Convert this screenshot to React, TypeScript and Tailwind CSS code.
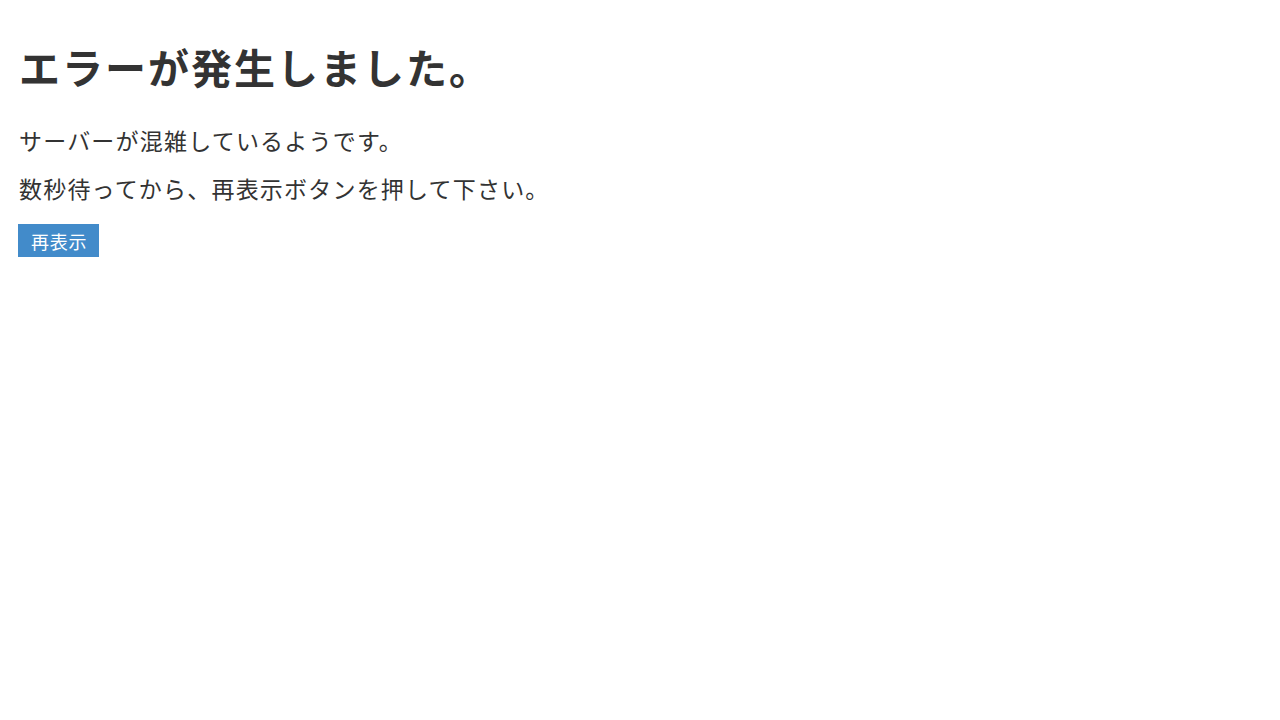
export default function App() {
  return (
    <main
      className="min-h-screen bg-white px-[18px] pt-[42px] text-[#333333]"
      style={{ fontFamily: '"Noto Sans CJK JP", "Noto Sans", sans-serif' }}
    >
      <h1 className="pl-[1px] text-[41px] font-bold leading-[48px] tracking-[2px]">エラーが発生しました。</h1>
      <p className="mt-[35px] pl-[1px] text-[23px] leading-[31px] tracking-[1.2px]">サーバーが混雑しているようです。</p>
      <p className="mt-[17px] pl-[1px] text-[23px] leading-[31px] tracking-[1.2px]">数秒待ってから、再表示ボタンを押して下さい。</p>
      <button className="mt-[20px] h-[33px] bg-[#428bca] px-[12px] pl-[13px] text-[18px] leading-none tracking-[0.8px] text-white">再表示</button>
    </main>
  );
}
